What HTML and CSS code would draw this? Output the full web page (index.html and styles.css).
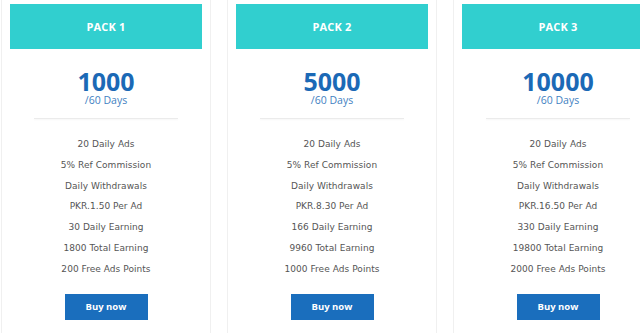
FILE: index.html
```
<!DOCTYPE html>
<html>
<head>
<meta charset="utf-8">
<link rel="stylesheet" href="styles.css">
</head>
<body>
<div class="plans">
  <div class="card">
    <div class="head">PACK 1</div>
    <div class="price">1000</div>
    <div class="period">/60 Days</div>
    <div class="divider"></div>
    <ul class="features">
      <li>20 Daily Ads</li>
      <li>5% Ref Commission</li>
      <li>Daily Withdrawals</li>
      <li>PKR.1.50 Per Ad</li>
      <li>30 Daily Earning</li>
      <li>1800 Total Earning</li>
      <li>200 Free Ads Points</li>
    </ul>
    <a class="btn">Buy now</a>
  </div>
  <div class="card">
    <div class="head">PACK 2</div>
    <div class="price">5000</div>
    <div class="period">/60 Days</div>
    <div class="divider"></div>
    <ul class="features">
      <li>20 Daily Ads</li>
      <li>5% Ref Commission</li>
      <li>Daily Withdrawals</li>
      <li>PKR.8.30 Per Ad</li>
      <li>166 Daily Earning</li>
      <li>9960 Total Earning</li>
      <li>1000 Free Ads Points</li>
    </ul>
    <a class="btn">Buy now</a>
  </div>
  <div class="card">
    <div class="head">PACK 3</div>
    <div class="price">10000</div>
    <div class="period">/60 Days</div>
    <div class="divider"></div>
    <ul class="features">
      <li>20 Daily Ads</li>
      <li>5% Ref Commission</li>
      <li>Daily Withdrawals</li>
      <li>PKR.16.50 Per Ad</li>
      <li>330 Daily Earning</li>
      <li>19800 Total Earning</li>
      <li>2000 Free Ads Points</li>
    </ul>
    <a class="btn">Buy now</a>
  </div>
</div>
</body>
</html>
```
FILE: styles.css
```
html, body {
  margin: 0;
  padding: 0;
  background: #ffffff;
  overflow: hidden;
}
body {
  font-family: "Open Sans", "Liberation Sans", sans-serif;
}
.plans {
  display: flex;
  gap: 16px;
  padding-left: 1px;
  margin-top: -4px;
}
.card {
  flex: 0 0 210px;
  box-sizing: border-box;
  border: 1px solid #f0f0f0;
  padding: 7px 8px 20px;
  display: flex;
  flex-direction: column;
  align-items: center;
}
.head {
  align-self: stretch;
  height: 45px;
  background: #31cfcf;
  color: #ffffff;
  font-weight: 700;
  font-size: 11px;
  letter-spacing: 0.2px;
  display: flex;
  align-items: center;
  justify-content: center;
}
.price {
  margin-top: 19px;
  font-size: 25px;
  font-weight: 700;
  line-height: 26px;
  color: #1b69b6;
}
.period {
  font-size: 10.5px;
  line-height: 12px;
  color: #3f7fc2;
}
.divider {
  margin-top: 12px;
  width: 144px;
  height: 1px;
  background: #ebebeb;
  box-shadow: 0 1px 2px rgba(0,0,0,0.05);
}
.features {
  list-style: none;
  margin: 15px 0 0;
  padding: 0;
  text-align: center;
  font-family: "DejaVu Sans", "Open Sans", sans-serif;
  font-size: 9px;
  letter-spacing: 0.05px;
  color: #555555;
}
.features li {
  height: 20.8px;
  line-height: 20.8px;
}
.btn {
  margin-top: 14px;
  width: 83px;
  height: 26px;
  background: #1a6ebd;
  color: #ffffff;
  font-size: 9.5px;
  font-weight: 700;
  display: flex;
  align-items: center;
  justify-content: center;
}
```
